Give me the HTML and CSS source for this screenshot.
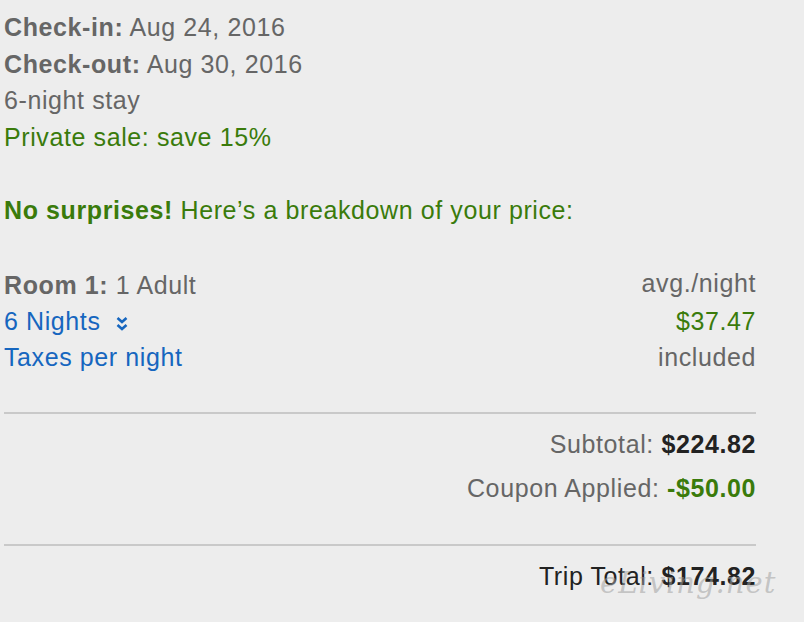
FILE: index.html
```html
<!DOCTYPE html>
<html>
<head>
<meta charset="utf-8">
<link rel="stylesheet" href="styles.css">
</head>
<body>
<div class="page">
  <div class="stay">
    <div class="line"><b>Check-in:</b> Aug 24, 2016</div>
    <div class="line"><b>Check-out:</b> Aug 30, 2016</div>
    <div class="line">6-night stay</div>
    <div class="line green">Private sale: save 15%</div>
  </div>
  <div class="intro green"><b>No surprises!</b> Here’s a breakdown of your price:</div>
  <div class="rows">
    <div class="row">
      <span><b>Room 1:</b> 1 Adult</span>
      <span class="avg">avg./night</span>
    </div>
    <div class="row">
      <span class="link">6 Nights <svg class="chev" width="12" height="16" viewBox="0 0 12 16"><path d="M1.5 2 L6 6 L10.5 2 M1.5 9 L6 13 L10.5 9" fill="none" stroke="#1666bf" stroke-width="2.6"/></svg></span>
      <span class="green">$37.47</span>
    </div>
    <div class="row">
      <span class="link">Taxes per night</span>
      <span>included</span>
    </div>
  </div>
  <div class="totals">
    <div class="tline">Subtotal: <b class="dark">$224.82</b></div>
    <div class="tline">Coupon Applied: <b class="green">-$50.00</b></div>
  </div>
  <div class="totals final">
    <div class="tline dark">Trip Total: <b>$174.82</b></div>
  </div>
  <div class="watermark">eLiving.net</div>
</div>
</body>
</html>
```
FILE: styles.css
```css
html, body {
  margin: 0;
  padding: 0;
  background: #ededed;
}
body {
  font-family: "Liberation Sans", Arial, sans-serif;
  font-size: 25px;
  letter-spacing: 0.6px;
  color: #666666;
  width: 804px;
  height: 622px;
  overflow: hidden;
}
.page {
  position: relative;
  padding: 9px 0 0 4px;
  width: 752px;
}
b { font-weight: bold; }
.green { color: #3a7b0b; }
.link { color: #1666bf; }
.dark { color: #222222; }
.stay .line {
  line-height: 36.67px;
}
.intro {
  margin-top: 36.67px;
  line-height: 36.67px;
}
.rows {
  margin-top: 38px;
}
.row {
  display: flex;
  justify-content: space-between;
  line-height: 36px;
}
.avg { position: relative; top: -2px; }
.chev {
  margin-left: 8px;
  vertical-align: -2px;
}
.totals {
  margin-top: 37px;
  border-top: 2px solid #c9c9c9;
  padding-top: 8px;
  text-align: right;
}
.tline { line-height: 44px; }
.final {
  margin-top: 34px;
}
.watermark {
  position: absolute;
  left: 600px;
  top: 566px;
  font-family: "DejaVu Serif", serif;
  font-style: italic;
  font-size: 29px;
  color: rgba(160, 160, 160, 0.55);
  letter-spacing: 1px;
  pointer-events: none;
}
```
